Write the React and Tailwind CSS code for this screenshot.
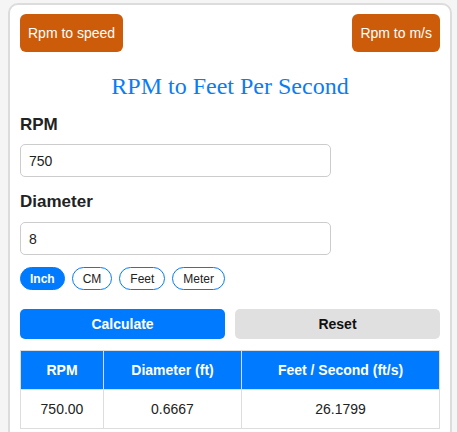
import { useState } from 'react';

const units = ['Inch', 'CM', 'Feet', 'Meter'];

export default function App() {
  const [unit, setUnit] = useState('Inch');

  return (
    <div className="min-h-screen bg-[#f5f5f5] pt-[3px] pl-[8px] font-['Liberation_Sans',Arial,sans-serif] text-[#222]">
      <div className="w-[444px] bg-white border-2 border-[#dcdcdc] rounded-[10px] px-[10px] pt-[9px] pb-[10px]">
        {/* Top nav buttons */}
        <div className="flex justify-between">
          <button className="h-[38px] px-[8px] rounded-[6px] bg-[#cc5c0a] text-white text-[14px]">Rpm to speed</button>
          <button className="h-[38px] px-[8px] rounded-[6px] bg-[#cc5c0a] text-white text-[14px]">Rpm to m/s</button>
        </div>

        <h1 className="mt-[18px] text-center text-[24px] leading-[32px] text-[#0a7cf5] font-['Liberation_Serif','Times_New_Roman',serif]">
          RPM to Feet Per Second
        </h1>

        {/* Inputs */}
        <label className="block mt-[13px] text-[17px] leading-[20px] font-bold">RPM</label>
        <input
          defaultValue="750"
          className="block mt-[9px] w-[311px] h-[33px] px-[8px] text-[14px] border border-[#ccc] rounded-[5px] outline-none"
        />

        <label className="block mt-[15px] text-[17px] leading-[20px] font-bold">Diameter</label>
        <input
          defaultValue="8"
          className="block mt-[10px] w-[311px] h-[33px] px-[8px] text-[14px] border border-[#ccc] rounded-[5px] outline-none"
        />

        <div className="flex gap-[7px] mt-[12px]">
          {units.map((u) => (
            <button
              key={u}
              onClick={() => setUnit(u)}
              className={
                u === unit
                  ? 'h-[23px] px-[9px] rounded-full border border-[#007bff] bg-[#007bff] text-white text-[12px] font-bold'
                  : 'h-[23px] px-[10px] rounded-full border border-[#007bff] bg-white text-[#222] text-[12px]'
              }
            >
              {u}
            </button>
          ))}
        </div>

        {/* Actions */}
        <div className="flex gap-[10px] mt-[19px]">
          <button className="flex-1 h-[30px] rounded-[5px] bg-[#007bff] text-white text-[14px] font-bold">Calculate</button>
          <button className="flex-1 h-[30px] rounded-[5px] bg-[#e0e0e0] text-[#111] text-[14px] font-bold">Reset</button>
        </div>

        {/* Result table */}
        <table className="mt-[11px] w-full border-collapse text-[14px]">
          <thead>
            <tr className="bg-[#007bff] text-white">
              <th className="w-[83px] h-[39px] border border-[#ddd] font-bold">RPM</th>
              <th className="w-[138px] h-[39px] border border-[#ddd] font-bold">Diameter (ft)</th>
              <th className="h-[39px] border border-[#ddd] font-bold">Feet / Second (ft/s)</th>
            </tr>
          </thead>
          <tbody>
            <tr className="text-[#222]">
              <td className="h-[39px] border border-[#ddd] text-center">750.00</td>
              <td className="h-[39px] border border-[#ddd] text-center">0.6667</td>
              <td className="h-[39px] border border-[#ddd] text-center">26.1799</td>
            </tr>
          </tbody>
        </table>
      </div>
    </div>
  );
}
